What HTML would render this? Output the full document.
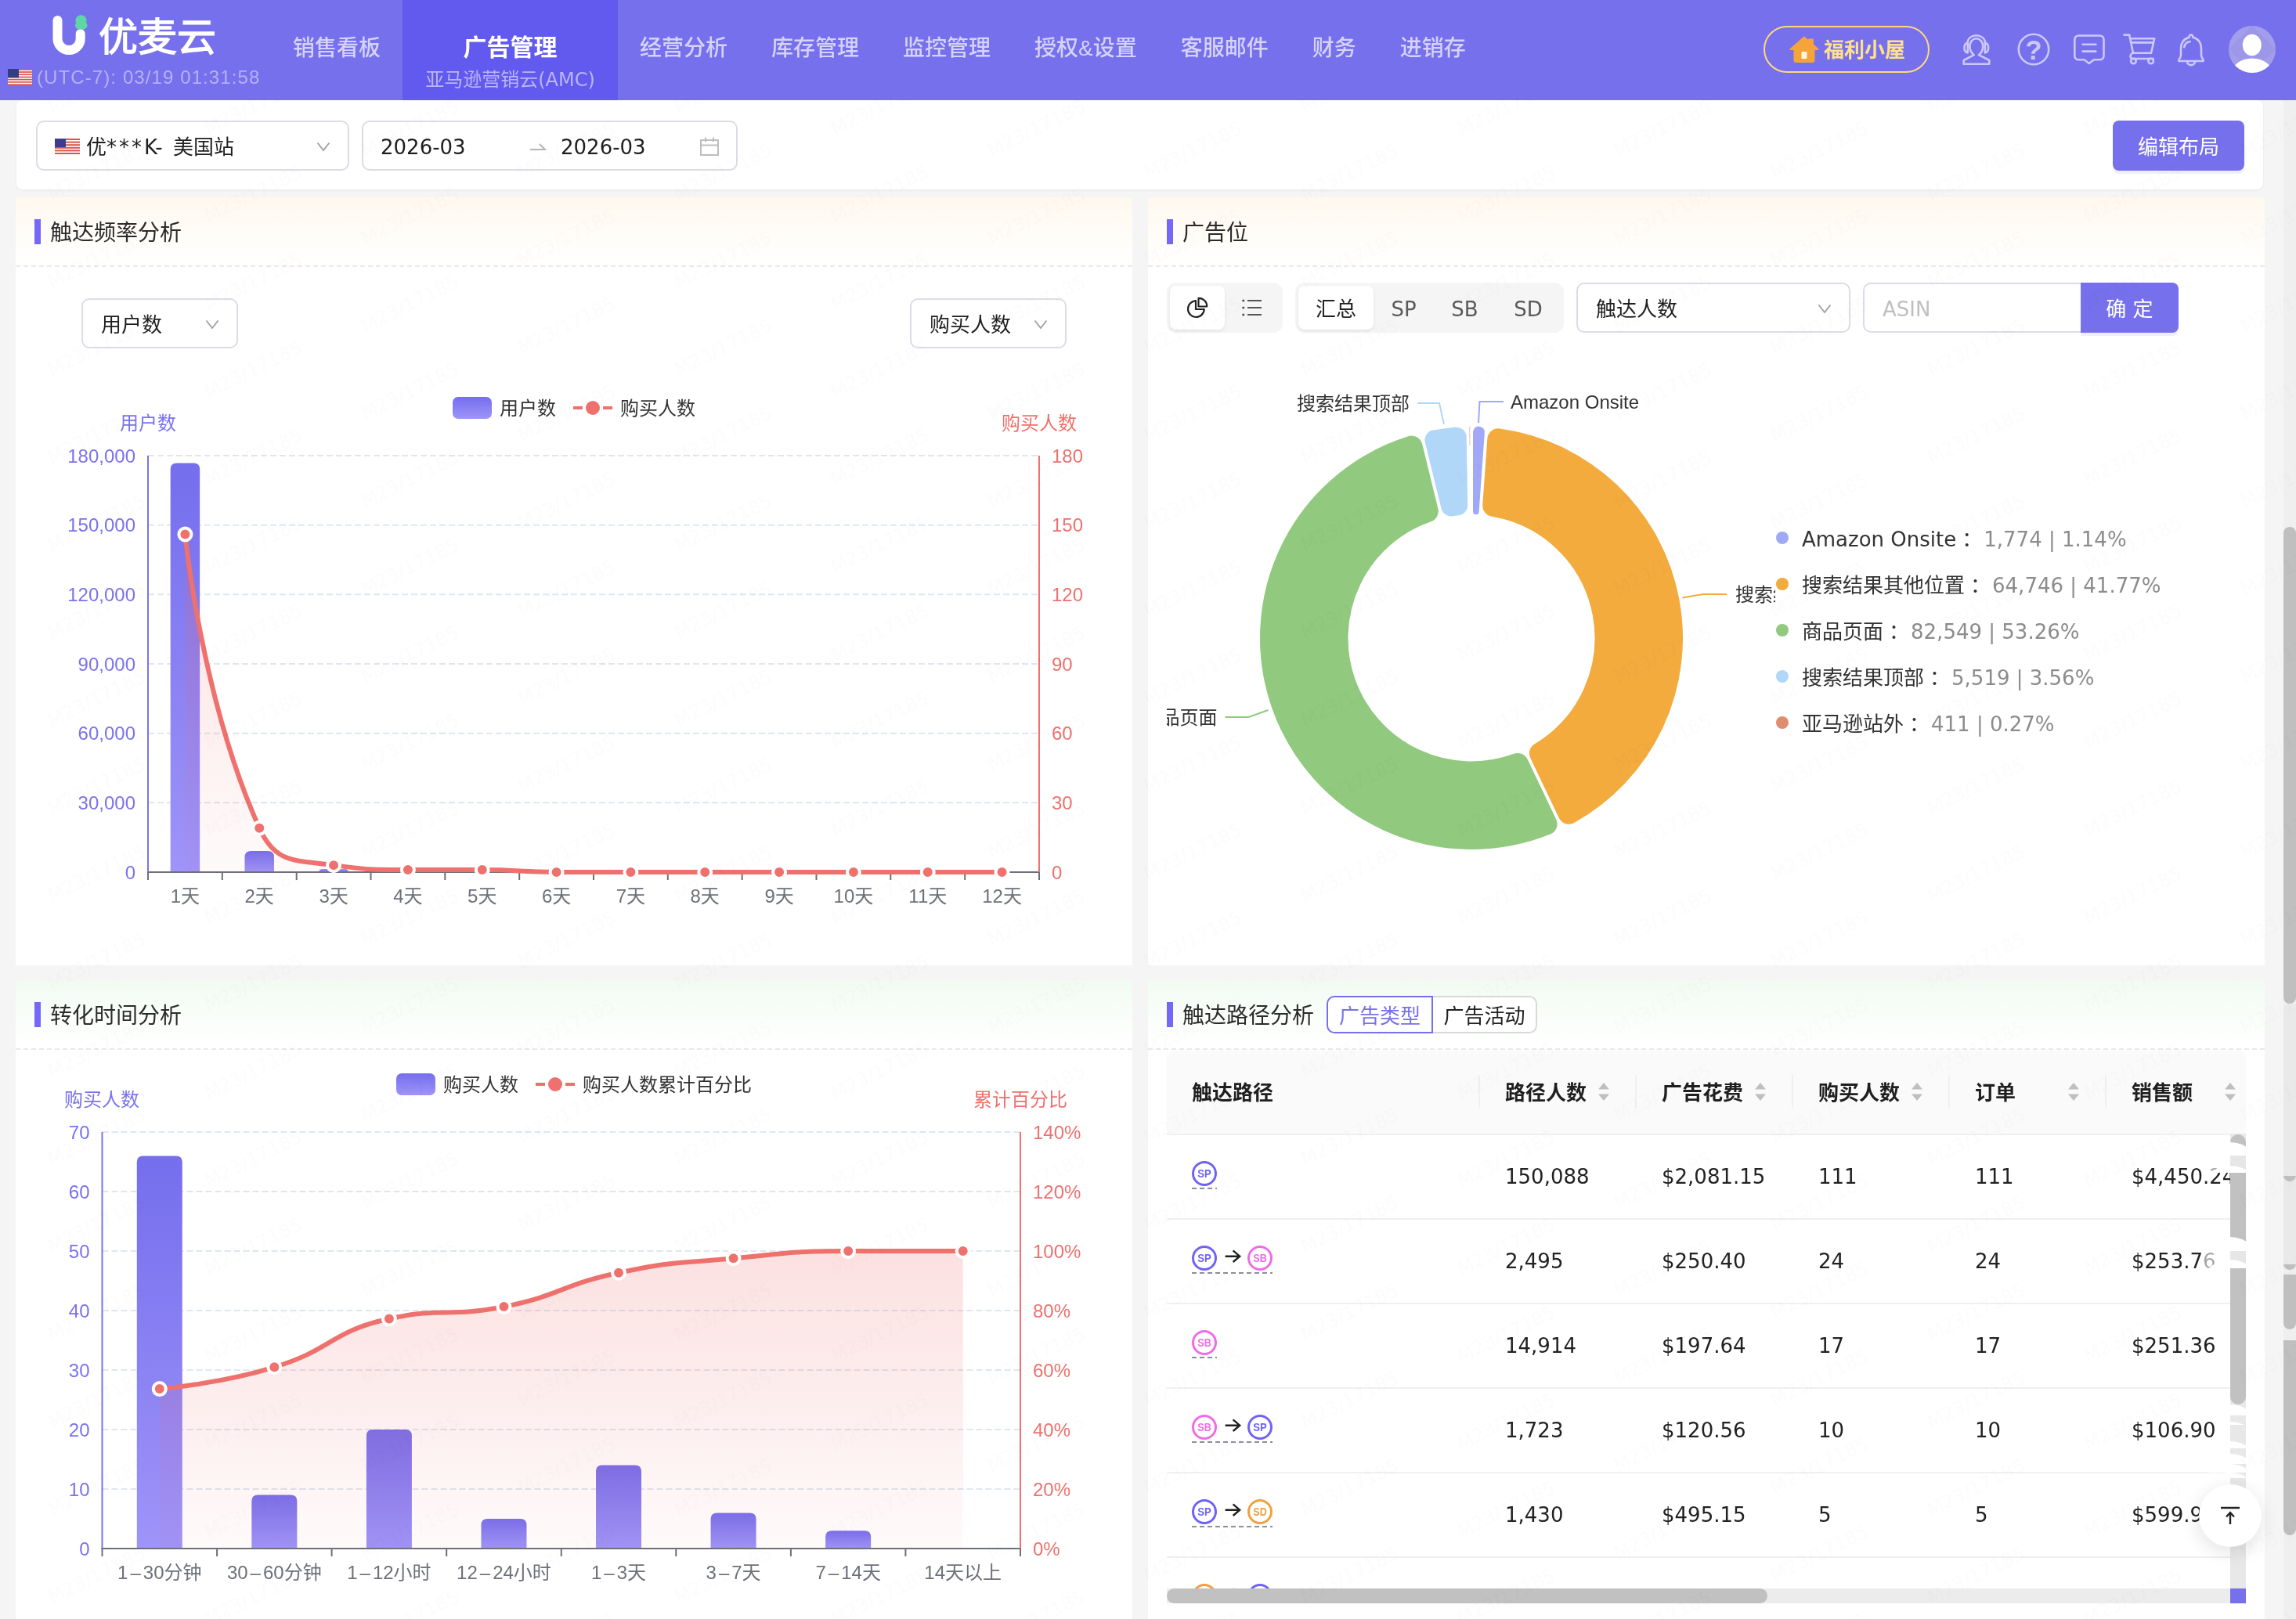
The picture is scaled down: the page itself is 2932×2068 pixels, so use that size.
<!DOCTYPE html>
<html lang="zh-CN">
<head>
<meta charset="utf-8">
<title>优麦云 - 广告管理 - 亚马逊营销云(AMC)</title>
<style>

*{box-sizing:border-box;margin:0;padding:0}
html,body{width:2932px;height:2068px;overflow:hidden;background:#f5f5f5}
body{font-family:"DejaVu Sans","Noto Sans CJK SC",sans-serif;font-size:26px;color:#222;}
#app{position:relative;width:2932px;height:2068px;overflow:hidden;will-change:transform}
.hdr{position:absolute;left:0;top:0;width:2932px;height:128px;background:#7670ed;z-index:5}
.hdr .logo-txt{position:absolute;left:126px;top:7px;font-family:"Noto Sans CJK SC","Liberation Sans",sans-serif;font-weight:400;font-size:50px;line-height:72px;color:#fff;letter-spacing:0px;white-space:nowrap;-webkit-text-stroke:1.4px #fff}
.hdr .tz{position:absolute;left:47px;top:84px;font-family:"Liberation Sans","Noto Sans CJK SC",sans-serif;font-size:24px;line-height:30px;color:#b5b1f6;white-space:nowrap;letter-spacing:1.1px}
.nav{position:absolute;left:346px;top:0;height:128px;display:flex;font-family:"Liberation Sans","Noto Sans CJK SC",sans-serif;}
.nav .it{height:128px;padding:0 28px;font-size:28px;font-weight:500;color:#d5d3fa;line-height:40px;padding-top:42px;white-space:nowrap;text-align:center}
.nav .it.on{background:#625aee;color:#fff;font-size:30px;padding-top:41px;font-weight:700}
.nav .it.on small{display:block;font-size:24px;font-weight:400;color:#b9b5f7;line-height:30px;margin-top:6px;font-family:"DejaVu Sans","Noto Sans CJK SC",sans-serif}
.pill{position:absolute;left:2252px;top:33px;width:212px;height:60px;border:2px solid #ffd978;border-radius:30px;}
.pill span{position:absolute;left:75px;top:0;line-height:58px;font-size:26px;font-weight:700;color:#ffe08c;font-family:"Liberation Sans","Noto Sans CJK SC",sans-serif;white-space:nowrap}
.filterbar{position:absolute;left:21px;top:128px;width:2869px;height:114px;background:#fff;border-radius:8px;box-shadow:0 1px 3px rgba(0,0,0,.06)}
.sel{position:absolute;height:64px;border:2px solid #dcdce6;border-radius:10px;background:#fff}
.sel .seltxt{position:absolute;top:0;line-height:64px;font-size:26px;color:#1f1f1f;white-space:nowrap}
.sel .flag{position:absolute}
.sel .chev{position:absolute}
.btn-primary{position:absolute;background:#7670ed;color:#fff;font-size:26px;text-align:center;border-radius:8px;box-shadow:0 4px 0 rgba(118,112,237,.12);white-space:nowrap}
.panel{position:absolute;background:#fff;overflow:hidden}
.phead{position:absolute;left:0;top:0;right:0;height:89px;}
.phead:after{content:"";position:absolute;left:0;right:0;bottom:0;height:2px;background:repeating-linear-gradient(90deg,#e9e9e9 0 6px,transparent 6px 10px)}
.phead.warm{background:linear-gradient(180deg,#fff8ee 0%,#fffdf9 60%,#ffffff 100%)}
.phead.green{background:linear-gradient(180deg,#f1fbf2 0%,#fbfefb 60%,#ffffff 100%)}
.phead .bar{position:absolute;left:24px;top:28px;width:8px;height:32px;background:#7568f7}
.phead .ptitle{position:absolute;left:44px;top:0;line-height:92px;font-size:28px;color:#2b2b2b;white-space:nowrap}
.seg{position:absolute;height:64px;background:#f5f5f5;border-radius:12px;padding:4px;display:flex}
.segitem{height:56px;line-height:60px;text-align:center;font-size:26px;color:#5a5a5a;border-radius:8px}
.segitem.on{background:#fff;box-shadow:0 2px 4px rgba(0,0,0,.08)}
.radio{position:absolute;height:48px;line-height:48px;border:2px solid #d9d9d9;text-align:center;font-size:26px;color:#222;background:#fff;border-radius:0 10px 10px 0;white-space:nowrap}
.radio.on{border-color:#7670ed;color:#7670ed;border-radius:10px 0 0 10px;z-index:2}
.chart{position:absolute;left:0;top:0}
.chart text{font-family:"Liberation Sans","Noto Sans CJK SC",sans-serif;font-size:24px}
.tbl{position:absolute;left:24px;top:90px;width:1378px;height:706px;overflow:hidden;border-radius:10px 10px 0 0}
.th{position:absolute;top:0;height:106px;line-height:108px;font-weight:700;font-size:26px;color:#1f1f1f;padding-left:32px;white-space:nowrap}
.th i{position:absolute;left:-2px;top:31px;width:2px;height:42px;background:#f0f0f0}
.td{position:absolute;height:108px;line-height:108px;font-size:26px;color:#222;padding-left:32px;white-space:nowrap}
.rowline{position:absolute;left:0;width:1400px;height:2px;background:#f0f0f0}

</style>
</head>
<body>
<div id="app">

<div class="hdr">
  <svg style="position:absolute;left:60px;top:14px" width="60" height="62" viewBox="0 0 60 62">
    <path d="M13.5 12 V35.5 a14.6 14.6 0 0 0 29.2 0 V29" fill="none" stroke="#fff" stroke-width="12" stroke-linecap="round"/>
    <circle cx="43.500" cy="12.300" r="7" fill="#5fd6a6"/><rect x="36" y="13.500" width="15.500" height="10" rx="5" fill="#5fd6a6"/>
  </svg>
  <div class="logo-txt">优麦云</div>
  <svg style="position:absolute;left:10px;top:88px" width="31" height="21" viewBox="0 0 31 21"><rect width="31" height="21" fill="#fff"/><g fill="#D9534F"><rect y="0" width="31" height="1.7"/><rect y="3.2" width="31" height="1.7"/><rect y="6.4" width="31" height="1.7"/><rect y="9.6" width="31" height="1.7"/><rect y="12.8" width="31" height="1.7"/><rect y="16" width="31" height="1.7"/><rect y="19.3" width="31" height="1.7"/></g><rect width="14" height="11.3" fill="#2f3f80"/></svg>
  <div class="tz">(UTC-7): 03/19 01:31:58</div>
  <div class="nav">
    <div class="it">销售看板</div>
    <div class="it on" style="width:275px;padding-left:0;padding-right:0">广告管理<small>亚马逊营销云(AMC)</small></div>
    <div class="it">经营分析</div>
    <div class="it">库存管理</div>
    <div class="it">监控管理</div>
    <div class="it">授权&amp;设置</div>
    <div class="it">客服邮件</div>
    <div class="it">财务</div>
    <div class="it">进销存</div>
  </div>
  <div class="pill">
    <svg style="position:absolute;left:31px;top:11px" width="38" height="34" viewBox="0 0 38 34">
      <path d="M19 1.5 L1.5 17 h5 v14 a2 2 0 0 0 2 2 h21 a2 2 0 0 0 2 -2 v-14 h5 L30 11 V4.5 h-5 V7 Z" fill="#f5a43a" stroke="#f5a43a" stroke-width="2" stroke-linejoin="round"/>
      <rect x="15.5" y="20" width="7" height="9" rx="1" fill="#fff7e0"/>
    </svg>
    <span>福利小屋</span>
  </div>
  <!-- headset -->
  <svg style="position:absolute;left:2504px;top:42px" width="40" height="42" viewBox="0 0 40 42" fill="none" stroke="#cbc8fa" stroke-width="2.600" stroke-linejoin="round" stroke-linecap="round">
    <path d="M16.700 28.200 C12.200 24.500 11.400 20.500 11.400 17.200 A8.400 10 0 0 1 28.200 17.200 C28.200 20.500 27.400 24.500 22.900 28.200 L36.300 35 V39.700 H3.700 V35 Z"/>
    <path d="M8.300 12.600 C9.300 6.600 14 3.200 19.800 3.200 C25.600 3.200 30.300 6.600 31.300 12.600"/>
    <path d="M8.800 12.800 C3 13.800 3 24.400 8.800 25.400 Z M30.800 12.800 C36.600 13.800 36.600 24.400 30.800 25.400 Z"/>
  </svg>
  <!-- help -->
  <svg style="position:absolute;left:2575px;top:41px" width="44" height="44" viewBox="0 0 44 44">
    <circle cx="22" cy="22" r="19.200" fill="none" stroke="#cbc8fa" stroke-width="2.600"/>
    <text x="22" y="34.500" text-anchor="middle" font-family="Liberation Sans,sans-serif" font-weight="700" font-size="35" fill="#cbc8fa">?</text>
  </svg>
  <!-- message -->
  <svg style="position:absolute;left:2646px;top:42px" width="44" height="42" viewBox="0 0 44 42" fill="none" stroke="#cbc8fa" stroke-width="2.600" stroke-linejoin="round" stroke-linecap="round">
    <path d="M8.300 3.500 h27.200 a5 5 0 0 1 5 5 v20.800 a5 5 0 0 1 -5 5 h-7.500 l-6.200 4.700 l-6.200 -4.700 h-7.300 a5 5 0 0 1 -5 -5 v-20.800 a5 5 0 0 1 5 -5 z"/>
    <path d="M13.600 14.800 h16.800 M13.600 23.600 h16.800"/>
  </svg>
  <!-- cart -->
  <svg style="position:absolute;left:2711px;top:42px" width="44" height="42" viewBox="0 0 44 42" fill="none" stroke="#cbc8fa" stroke-width="2.600" stroke-linejoin="round" stroke-linecap="round">
    <path d="M1.500 2.600 H8.200 L13 25.800 H36 L40.200 7.200 H9.300 M10.400 12.400 H39"/>
    <path d="M13 25.800 C8.500 27 8.500 33 12.500 33 H38.800"/>
    <circle cx="13.400" cy="36" r="3.300"/><circle cx="35.700" cy="36" r="3.300"/>
  </svg>
  <!-- bell -->
  <svg style="position:absolute;left:2779px;top:43px" width="38" height="42" viewBox="0 0 38 42" fill="none" stroke="#cbc8fa" stroke-width="2.600" stroke-linejoin="round" stroke-linecap="round">
    <path d="M16.800 4.600 a2.300 2.300 0 1 1 4.400 0 C28 6.500 32 11.500 32 19.600 V27 C32 30 33.500 32 34.600 33.200 V35 H3.400 V33.200 C4.500 32 6 30 6 27 V19.600 C6 11.500 10 6.500 16.800 4.600 Z"/>
    <path d="M14 35.500 a5 4.600 0 0 0 10 0"/>
    <path d="M10.200 17.200 C11 13 14 10.600 17.700 10"/>
  </svg>
  <!-- avatar -->
  <svg style="position:absolute;left:2846px;top:33px" width="60" height="60" viewBox="0 0 60 60">
    <defs><clipPath id="avc"><circle cx="30" cy="30" r="30"/></clipPath></defs>
    <circle cx="30" cy="30" r="30" fill="#a29eec"/>
    <g clip-path="url(#avc)"><path d="M30 0 L60 30 L30 60 L0 30 Z" fill="#9a95e6" opacity="0.700"/><ellipse cx="29.800" cy="24.500" rx="12" ry="13.700" fill="#fff"/><ellipse cx="30" cy="62.500" rx="27" ry="21" fill="#fff"/></g>
  </svg>
</div>

<!-- filter bar -->
<div class="filterbar">
  <div class="sel" style="left:25px;top:26px;width:400px;">
    <svg class="flag" style="left:22px;top:21px" width="32" height="20" viewBox="0 0 32 20"><rect width="32" height="20" fill="#fff"/><g fill="#D9534F"><rect y="0" width="32" height="2"/><rect y="3.6" width="32" height="2"/><rect y="7.2" width="32" height="2"/><rect y="10.8" width="32" height="2"/><rect y="14.4" width="32" height="2"/><rect y="18" width="32" height="2"/></g><rect width="14" height="11" fill="#3C3B8E"/></svg>
    <span class="seltxt" style="left:62px;word-spacing:5px">优<span style="letter-spacing:3px">***</span>K- 美国站</span>
    <svg class="chev" style="right:22px;top:25px" width="18" height="13" viewBox="0 0 18 13"><path d="M1.5 1.5 L9 11 L16.5 1.5" fill="none" stroke="#a3a3a3" stroke-width="2"/></svg>
  </div>
  <div class="sel" style="left:441px;top:26px;width:480px;">
    <span class="seltxt" style="left:22px">2026-03</span>
    <svg style="position:absolute;left:212px;top:26px" width="22" height="12" viewBox="0 0 22 12"><path d="M1 9 H20 L13 2" fill="none" stroke="#b5b5b5" stroke-width="2"/></svg>
    <span class="seltxt" style="left:252px">2026-03</span>
    <svg style="position:absolute;left:430px;top:19px" width="24" height="24" viewBox="0 0 24 24"><rect x="1" y="4" width="22" height="19" fill="none" stroke="#bdbdbd" stroke-width="2"/><path d="M1 10.5 H23 M7 0.5 V6 M17 0.5 V6" stroke="#bdbdbd" stroke-width="2" fill="none"/></svg>
  </div>
  <div class="btn-primary" style="left:2677px;top:26px;width:168px;height:64px;line-height:68px;">编辑布局</div>
</div>

<!-- panel 1 -->
<div class="panel" style="left:20px;top:252px;width:1426px;height:981px;">
  <div class="phead warm"><i class="bar"></i><span class="ptitle">触达频率分析</span></div>
  <div class="sel" style="left:84px;top:129px;width:200px;"><span class="seltxt" style="left:23px">用户数</span>
    <svg class="chev" style="right:22px;top:25px" width="18" height="13" viewBox="0 0 18 13"><path d="M1.5 1.5 L9 11 L16.5 1.5" fill="none" stroke="#a3a3a3" stroke-width="2"/></svg></div>
  <div class="sel" style="left:1142px;top:129px;width:200px;"><span class="seltxt" style="left:23px">购买人数</span>
    <svg class="chev" style="right:22px;top:25px" width="18" height="13" viewBox="0 0 18 13"><path d="M1.5 1.5 L9 11 L16.5 1.5" fill="none" stroke="#a3a3a3" stroke-width="2"/></svg></div>
  <svg class="chart" width="1426" height="981" viewBox="20 252 1426 981">
<defs><linearGradient id="bga" x1="0" y1="0" x2="0" y2="1"><stop offset="0" stop-color="#756eed"/><stop offset="1" stop-color="#9e94f9"/></linearGradient>
<linearGradient id="aga" x1="0" y1="0" x2="0" y2="1"><stop offset="0" stop-color="#ee6666" stop-opacity="0.2"/><stop offset="1" stop-color="#ee6666" stop-opacity="0.03"/></linearGradient></defs>
<path d="M189.0 582.0 H1327.0" stroke="#e0e6f1" stroke-width="2" stroke-dasharray="8 4" fill="none"/>
<path d="M189.0 670.7 H1327.0" stroke="#e0e6f1" stroke-width="2" stroke-dasharray="8 4" fill="none"/>
<path d="M189.0 759.3 H1327.0" stroke="#e0e6f1" stroke-width="2" stroke-dasharray="8 4" fill="none"/>
<path d="M189.0 848.0 H1327.0" stroke="#e0e6f1" stroke-width="2" stroke-dasharray="8 4" fill="none"/>
<path d="M189.0 936.7 H1327.0" stroke="#e0e6f1" stroke-width="2" stroke-dasharray="8 4" fill="none"/>
<path d="M189.0 1025.3 H1327.0" stroke="#e0e6f1" stroke-width="2" stroke-dasharray="8 4" fill="none"/>
<path d="M217.67 1114.00 V599.46 Q217.67 591.46 225.67 591.46 H247.17 Q255.17 591.46 255.17 599.46 V1114.00 Z" fill="url(#bga)"/>
<path d="M312.50 1114.00 V1095.10 Q312.50 1087.10 320.50 1087.10 H342.00 Q350.00 1087.10 350.00 1095.10 V1114.00 Z" fill="url(#bga)"/>
<path d="M407.33 1114.00 V1114.00 Q407.33 1110.16 411.18 1110.16 H440.99 Q444.83 1110.16 444.83 1114.00 V1114.00 Z" fill="url(#bga)"/>
<path d="M502.17 1114.00 V1114.00 Q502.17 1113.23 502.94 1113.23 H538.90 Q539.67 1113.23 539.67 1114.00 V1114.00 Z" fill="url(#bga)"/>
<path d="M597.00 1114.00 V1114.00 Q597.00 1113.65 597.35 1113.65 H634.15 Q634.50 1113.65 634.50 1114.00 V1114.00 Z" fill="url(#bga)"/>
<path d="M188.0 1114.0 H1328.0" stroke="#6e7079" stroke-width="2" fill="none"/>
<path d="M189.0 1114.0 v10 M283.8 1114.0 v10 M378.7 1114.0 v10 M473.5 1114.0 v10 M568.3 1114.0 v10 M663.2 1114.0 v10 M758.0 1114.0 v10 M852.8 1114.0 v10 M947.7 1114.0 v10 M1042.5 1114.0 v10 M1137.3 1114.0 v10 M1232.2 1114.0 v10 M1327.0 1114.0 v10 " stroke="#6e7079" stroke-width="2" fill="none"/>
<text x="236.4" y="1153.0" text-anchor="middle" fill="#6e7079">1天</text>
<text x="331.2" y="1153.0" text-anchor="middle" fill="#6e7079">2天</text>
<text x="426.1" y="1153.0" text-anchor="middle" fill="#6e7079">3天</text>
<text x="520.9" y="1153.0" text-anchor="middle" fill="#6e7079">4天</text>
<text x="615.8" y="1153.0" text-anchor="middle" fill="#6e7079">5天</text>
<text x="710.6" y="1153.0" text-anchor="middle" fill="#6e7079">6天</text>
<text x="805.4" y="1153.0" text-anchor="middle" fill="#6e7079">7天</text>
<text x="900.2" y="1153.0" text-anchor="middle" fill="#6e7079">8天</text>
<text x="995.1" y="1153.0" text-anchor="middle" fill="#6e7079">9天</text>
<text x="1089.9" y="1153.0" text-anchor="middle" fill="#6e7079">10天</text>
<text x="1184.8" y="1153.0" text-anchor="middle" fill="#6e7079">11天</text>
<text x="1279.6" y="1153.0" text-anchor="middle" fill="#6e7079">12天</text>
<path d="M189.0 582.0 V1114.0" stroke="#7a72f0" stroke-width="2" fill="none"/>
<path d="M1327.0 582.0 V1114.0" stroke="#ee716d" stroke-width="2" fill="none"/>
<text x="173.0" y="590.5" text-anchor="end" fill="#7a72f0">180,000</text>
<text x="173.0" y="679.2" text-anchor="end" fill="#7a72f0">150,000</text>
<text x="173.0" y="767.8" text-anchor="end" fill="#7a72f0">120,000</text>
<text x="173.0" y="856.5" text-anchor="end" fill="#7a72f0">90,000</text>
<text x="173.0" y="945.2" text-anchor="end" fill="#7a72f0">60,000</text>
<text x="173.0" y="1033.8" text-anchor="end" fill="#7a72f0">30,000</text>
<text x="173.0" y="1122.5" text-anchor="end" fill="#7a72f0">0</text>
<text x="1343.0" y="590.5" text-anchor="start" fill="#ee716d">180</text>
<text x="1343.0" y="679.2" text-anchor="start" fill="#ee716d">150</text>
<text x="1343.0" y="767.8" text-anchor="start" fill="#ee716d">120</text>
<text x="1343.0" y="856.5" text-anchor="start" fill="#ee716d">90</text>
<text x="1343.0" y="945.2" text-anchor="start" fill="#ee716d">60</text>
<text x="1343.0" y="1033.8" text-anchor="start" fill="#ee716d">30</text>
<text x="1343.0" y="1122.5" text-anchor="start" fill="#ee716d">0</text>
<text x="189.0" y="549.0" text-anchor="middle" fill="#7a72f0">用户数</text>
<text x="1327.0" y="549.0" text-anchor="middle" fill="#ee716d">购买人数</text>
<path d="M236.42 682.49 C236.42 682.49 256.80 891.93 331.25 1057.84 C351.63 1103.26 376.08 1098.54 426.08 1105.13 C470.92 1111.04 473.45 1111.04 520.92 1111.04 C568.29 1111.04 568.34 1111.04 615.75 1111.04 C663.18 1111.04 663.16 1114.00 710.58 1114.00 C757.99 1114.00 758.00 1114.00 805.42 1114.00 C852.83 1114.00 852.83 1114.00 900.25 1114.00 C947.67 1114.00 947.67 1114.00 995.08 1114.00 C1042.50 1114.00 1042.50 1114.00 1089.92 1114.00 C1137.33 1114.00 1137.33 1114.00 1184.75 1114.00 C1232.17 1114.00 1279.58 1114.00 1279.58 1114.00 L1279.58 1114.00 L236.42 1114.00 Z" fill="url(#aga)"/>
<path d="M236.42 682.49 C236.42 682.49 256.80 891.93 331.25 1057.84 C351.63 1103.26 376.08 1098.54 426.08 1105.13 C470.92 1111.04 473.45 1111.04 520.92 1111.04 C568.29 1111.04 568.34 1111.04 615.75 1111.04 C663.18 1111.04 663.16 1114.00 710.58 1114.00 C757.99 1114.00 758.00 1114.00 805.42 1114.00 C852.83 1114.00 852.83 1114.00 900.25 1114.00 C947.67 1114.00 947.67 1114.00 995.08 1114.00 C1042.50 1114.00 1042.50 1114.00 1089.92 1114.00 C1137.33 1114.00 1137.33 1114.00 1184.75 1114.00 C1232.17 1114.00 1279.58 1114.00 1279.58 1114.00" fill="none" stroke="#ee716d" stroke-width="6" stroke-linejoin="round" stroke-linecap="butt"/>
<circle cx="236.42" cy="682.49" r="8" fill="#ee716d" stroke="#fff" stroke-width="4"/>
<circle cx="331.25" cy="1057.84" r="8" fill="#ee716d" stroke="#fff" stroke-width="4"/>
<circle cx="426.08" cy="1105.13" r="8" fill="#ee716d" stroke="#fff" stroke-width="4"/>
<circle cx="520.92" cy="1111.04" r="8" fill="#ee716d" stroke="#fff" stroke-width="4"/>
<circle cx="615.75" cy="1111.04" r="8" fill="#ee716d" stroke="#fff" stroke-width="4"/>
<circle cx="710.58" cy="1114.00" r="8" fill="#ee716d" stroke="#fff" stroke-width="4"/>
<circle cx="805.42" cy="1114.00" r="8" fill="#ee716d" stroke="#fff" stroke-width="4"/>
<circle cx="900.25" cy="1114.00" r="8" fill="#ee716d" stroke="#fff" stroke-width="4"/>
<circle cx="995.08" cy="1114.00" r="8" fill="#ee716d" stroke="#fff" stroke-width="4"/>
<circle cx="1089.92" cy="1114.00" r="8" fill="#ee716d" stroke="#fff" stroke-width="4"/>
<circle cx="1184.75" cy="1114.00" r="8" fill="#ee716d" stroke="#fff" stroke-width="4"/>
<circle cx="1279.58" cy="1114.00" r="8" fill="#ee716d" stroke="#fff" stroke-width="4"/>
<rect x="578.0" y="507.0" width="50" height="28" rx="7" fill="url(#bga)"/>
<text x="638.0" y="529.5" fill="#333">用户数</text>
<path d="M732.0 521.0 h12 M770.0 521.0 h12" stroke="#ee716d" stroke-width="4" fill="none"/>
<circle cx="757.0" cy="521.0" r="9" fill="#ee716d"/>
<text x="792.0" y="529.5" fill="#333">购买人数</text>
</svg>
</div>

<!-- panel 2 -->
<div class="panel" style="left:1466px;top:252px;width:1426px;height:981px;">
  <div class="phead warm"><i class="bar"></i><span class="ptitle">广告位</span></div>
  <div class="seg" style="left:24px;top:109px;width:148px;">
    <div class="segitem on" style="width:70px;">
      <svg width="28" height="28" viewBox="0 0 28 28" style="margin-top:14px"><path d="M12 5.2 A10.4 10.4 0 1 0 22.8 16 H12 Z" fill="none" stroke="#222" stroke-width="2.2" stroke-linejoin="round"/><path d="M15.5 1.8 A10.4 10.4 0 0 1 26.2 12.5 H15.5 Z" fill="none" stroke="#222" stroke-width="2.2" stroke-linejoin="round"/></svg>
    </div>
    <div class="segitem" style="width:70px;">
      <svg width="26" height="22" viewBox="0 0 26 22" style="margin-top:17px"><g stroke="#555" stroke-width="2.2" fill="none"><path d="M7 2 H25 M7 11 H25 M7 20 H25"/></g><g fill="#555"><circle cx="1.8" cy="2" r="1.6"/><circle cx="1.8" cy="11" r="1.6"/><circle cx="1.8" cy="20" r="1.6"/></g></svg>
    </div>
  </div>
  <div class="seg" style="left:188px;top:109px;width:343px;">
    <div class="segitem on" style="width:96px;color:#222">汇总</div>
    <div class="segitem" style="width:77px;">SP</div>
    <div class="segitem" style="width:79px;">SB</div>
    <div class="segitem" style="width:83px;">SD</div>
  </div>
  <div class="sel" style="left:547px;top:109px;width:350px;"><span class="seltxt" style="left:23px">触达人数</span>
    <svg class="chev" style="right:22px;top:25px" width="18" height="13" viewBox="0 0 18 13"><path d="M1.5 1.5 L9 11 L16.5 1.5" fill="none" stroke="#a3a3a3" stroke-width="2"/></svg></div>
  <div class="sel" style="left:913px;top:109px;width:290px;border-radius:10px 0 0 10px;"><span class="seltxt" style="left:23px;color:#bfbfbf">ASIN</span></div>
  <div class="btn-primary" style="left:1191px;top:109px;width:125px;height:64px;line-height:68px;border-radius:0 8px 8px 0;">确 定</div>
  <svg class="chart" style="left:24px;top:170px" width="777" height="790" viewBox="1490 422 777 790">
<path d="M1895.88 552.61 L1888.60 653.81 A3.80 3.80 0 0 1 1881.01 653.53 L1881.02 552.07 A7.44 7.44 0 1 1 1895.88 552.61 Z" fill="#a0a8f7"/>
<path d="M1913.32 561.31 A256.00 256.00 0 0 1 2003.44 1038.72 L1966.95 962.23 A171.50 171.50 0 0 0 1907.23 645.84 Z" fill="#f2ab3c" stroke="#f2ab3c" stroke-width="28.0" stroke-linejoin="round"/>
<path d="M1974.56 1052.50 A256.00 256.00 0 1 1 1802.63 570.66 L1822.81 652.97 A171.50 171.50 0 1 0 1938.07 976.01 Z" fill="#91c97f" stroke="#91c97f" stroke-width="28.0" stroke-linejoin="round"/>
<path d="M1832.49 562.24 A257.00 257.00 0 0 1 1859.73 558.72 L1861.17 645.43 A170.50 170.50 0 0 0 1853.13 646.47 Z" fill="#b0d7f7" stroke="#b0d7f7" stroke-width="26.0" stroke-linejoin="round"/>
<path d="M1876.75 545.01 L1876.95 569.01" stroke="#e08d6f" stroke-width="1" stroke-opacity="0.6" fill="none"/>
<path d="M1844 542 L1838 515 H1810" fill="none" stroke="#b0d7f7" stroke-width="2"/>
<path d="M1888 540 L1889.500 513 H1920" fill="none" stroke="#a0a8f7" stroke-width="2"/>
<path d="M2148.500 763.500 L2175 759 H2205" fill="none" stroke="#f2ab3c" stroke-width="2"/>
<path d="M1619.500 907 L1594.500 916 H1564.500" fill="none" stroke="#91c97f" stroke-width="2"/>
<text x="1800" y="523.500" text-anchor="end" fill="#333">搜索结果顶部</text>
<text x="1929" y="521.500" text-anchor="start" fill="#333">Amazon Onsite</text>
<text x="2216" y="768" text-anchor="start" fill="#333">搜索结果其他位置</text>
<text x="1554.500" y="924.500" text-anchor="end" fill="#333">商品页面</text>
</svg>
<div style="position:absolute;left:801px;top:400px;width:560px;height:330px;background:#fff"></div>
<div style="position:absolute;left:802px;top:417.0px;height:40px;line-height:40px;white-space:nowrap;font-size:26px;color:#333"><i style="position:absolute;left:0;top:10px;width:16px;height:16px;border-radius:8px;background:#a0a8f7"></i><span style="margin-left:33px">Amazon Onsite<span style="position:relative;left:7px">：</span></span><span style="color:#8c8c8c;margin-left:9px">1,774 | 1.14%</span></div>
<div style="position:absolute;left:802px;top:475.9px;height:40px;line-height:40px;white-space:nowrap;font-size:26px;color:#333"><i style="position:absolute;left:0;top:10px;width:16px;height:16px;border-radius:8px;background:#f2ab3c"></i><span style="margin-left:33px">搜索结果其他位置<span style="position:relative;left:7px">：</span></span><span style="color:#8c8c8c;margin-left:9px">64,746 | 41.77%</span></div>
<div style="position:absolute;left:802px;top:534.8px;height:40px;line-height:40px;white-space:nowrap;font-size:26px;color:#333"><i style="position:absolute;left:0;top:10px;width:16px;height:16px;border-radius:8px;background:#91c97f"></i><span style="margin-left:33px">商品页面<span style="position:relative;left:7px">：</span></span><span style="color:#8c8c8c;margin-left:9px">82,549 | 53.26%</span></div>
<div style="position:absolute;left:802px;top:593.7px;height:40px;line-height:40px;white-space:nowrap;font-size:26px;color:#333"><i style="position:absolute;left:0;top:10px;width:16px;height:16px;border-radius:8px;background:#b0d7f7"></i><span style="margin-left:33px">搜索结果顶部<span style="position:relative;left:7px">：</span></span><span style="color:#8c8c8c;margin-left:9px">5,519 | 3.56%</span></div>
<div style="position:absolute;left:802px;top:652.6px;height:40px;line-height:40px;white-space:nowrap;font-size:26px;color:#333"><i style="position:absolute;left:0;top:10px;width:16px;height:16px;border-radius:8px;background:#e08d6f"></i><span style="margin-left:33px">亚马逊站外<span style="position:relative;left:7px">：</span></span><span style="color:#8c8c8c;margin-left:9px">411 | 0.27%</span></div>
</div>

<!-- panel 3 -->
<div class="panel" style="left:20px;top:1252px;width:1426px;height:816px;">
  <div class="phead green"><i class="bar"></i><span class="ptitle">转化时间分析</span></div>
  <svg class="chart" width="1426" height="816" viewBox="20 1252 1426 816">
<defs><linearGradient id="bgb" x1="0" y1="0" x2="0" y2="1"><stop offset="0" stop-color="#756eed"/><stop offset="1" stop-color="#9e94f9"/></linearGradient>
<linearGradient id="agb" x1="0" y1="0" x2="0" y2="1"><stop offset="0" stop-color="#ee6666" stop-opacity="0.2"/><stop offset="1" stop-color="#ee6666" stop-opacity="0.03"/></linearGradient></defs>
<path d="M130.5 1446.0 H1303.0" stroke="#e0e6f1" stroke-width="2" stroke-dasharray="8 4" fill="none"/>
<path d="M130.5 1522.0 H1303.0" stroke="#e0e6f1" stroke-width="2" stroke-dasharray="8 4" fill="none"/>
<path d="M130.5 1598.0 H1303.0" stroke="#e0e6f1" stroke-width="2" stroke-dasharray="8 4" fill="none"/>
<path d="M130.5 1674.0 H1303.0" stroke="#e0e6f1" stroke-width="2" stroke-dasharray="8 4" fill="none"/>
<path d="M130.5 1750.0 H1303.0" stroke="#e0e6f1" stroke-width="2" stroke-dasharray="8 4" fill="none"/>
<path d="M130.5 1826.0 H1303.0" stroke="#e0e6f1" stroke-width="2" stroke-dasharray="8 4" fill="none"/>
<path d="M130.5 1902.0 H1303.0" stroke="#e0e6f1" stroke-width="2" stroke-dasharray="8 4" fill="none"/>
<path d="M174.78 1978.00 V1484.40 Q174.78 1476.40 182.78 1476.40 H224.78 Q232.78 1476.40 232.78 1484.40 V1978.00 Z" fill="url(#bgb)"/>
<path d="M321.34 1978.00 V1917.60 Q321.34 1909.60 329.34 1909.60 H371.34 Q379.34 1909.60 379.34 1917.60 V1978.00 Z" fill="url(#bgb)"/>
<path d="M467.91 1978.00 V1834.00 Q467.91 1826.00 475.91 1826.00 H517.91 Q525.91 1826.00 525.91 1834.00 V1978.00 Z" fill="url(#bgb)"/>
<path d="M614.47 1978.00 V1948.00 Q614.47 1940.00 622.47 1940.00 H664.47 Q672.47 1940.00 672.47 1948.00 V1978.00 Z" fill="url(#bgb)"/>
<path d="M761.03 1978.00 V1879.60 Q761.03 1871.60 769.03 1871.60 H811.03 Q819.03 1871.60 819.03 1879.60 V1978.00 Z" fill="url(#bgb)"/>
<path d="M907.59 1978.00 V1940.40 Q907.59 1932.40 915.59 1932.40 H957.59 Q965.59 1932.40 965.59 1940.40 V1978.00 Z" fill="url(#bgb)"/>
<path d="M1054.16 1978.00 V1963.20 Q1054.16 1955.20 1062.16 1955.20 H1104.16 Q1112.16 1955.20 1112.16 1963.20 V1978.00 Z" fill="url(#bgb)"/>
<path d="M129.5 1978.0 H1304.0" stroke="#6e7079" stroke-width="2" fill="none"/>
<path d="M130.5 1978.0 v10 M277.1 1978.0 v10 M423.6 1978.0 v10 M570.2 1978.0 v10 M716.8 1978.0 v10 M863.3 1978.0 v10 M1009.9 1978.0 v10 M1156.4 1978.0 v10 M1303.0 1978.0 v10 " stroke="#6e7079" stroke-width="2" fill="none"/>
<text x="203.8" y="2017.0" text-anchor="middle" fill="#6e7079">1<tspan dx="3">–</tspan><tspan dx="3">30分钟</tspan></text>
<text x="350.3" y="2017.0" text-anchor="middle" fill="#6e7079">30<tspan dx="3">–</tspan><tspan dx="3">60分钟</tspan></text>
<text x="496.9" y="2017.0" text-anchor="middle" fill="#6e7079">1<tspan dx="3">–</tspan><tspan dx="3">12小时</tspan></text>
<text x="643.5" y="2017.0" text-anchor="middle" fill="#6e7079">12<tspan dx="3">–</tspan><tspan dx="3">24小时</tspan></text>
<text x="790.0" y="2017.0" text-anchor="middle" fill="#6e7079">1<tspan dx="3">–</tspan><tspan dx="3">3天</tspan></text>
<text x="936.6" y="2017.0" text-anchor="middle" fill="#6e7079">3<tspan dx="3">–</tspan><tspan dx="3">7天</tspan></text>
<text x="1083.2" y="2017.0" text-anchor="middle" fill="#6e7079">7<tspan dx="3">–</tspan><tspan dx="3">14天</tspan></text>
<text x="1229.7" y="2017.0" text-anchor="middle" fill="#6e7079">14天以上</text>
<path d="M130.5 1446.0 V1978.0" stroke="#7a72f0" stroke-width="2" fill="none"/>
<path d="M1303.0 1446.0 V1978.0" stroke="#ee716d" stroke-width="2" fill="none"/>
<text x="114.5" y="1454.5" text-anchor="end" fill="#7a72f0">70</text>
<text x="114.5" y="1530.5" text-anchor="end" fill="#7a72f0">60</text>
<text x="114.5" y="1606.5" text-anchor="end" fill="#7a72f0">50</text>
<text x="114.5" y="1682.5" text-anchor="end" fill="#7a72f0">40</text>
<text x="114.5" y="1758.5" text-anchor="end" fill="#7a72f0">30</text>
<text x="114.5" y="1834.5" text-anchor="end" fill="#7a72f0">20</text>
<text x="114.5" y="1910.5" text-anchor="end" fill="#7a72f0">10</text>
<text x="114.5" y="1986.5" text-anchor="end" fill="#7a72f0">0</text>
<text x="1319.0" y="1454.5" text-anchor="start" fill="#ee716d">140%</text>
<text x="1319.0" y="1530.5" text-anchor="start" fill="#ee716d">120%</text>
<text x="1319.0" y="1606.5" text-anchor="start" fill="#ee716d">100%</text>
<text x="1319.0" y="1682.5" text-anchor="start" fill="#ee716d">80%</text>
<text x="1319.0" y="1758.5" text-anchor="start" fill="#ee716d">60%</text>
<text x="1319.0" y="1834.5" text-anchor="start" fill="#ee716d">40%</text>
<text x="1319.0" y="1910.5" text-anchor="start" fill="#ee716d">20%</text>
<text x="1319.0" y="1986.5" text-anchor="start" fill="#ee716d">0%</text>
<text x="130.0" y="1413.0" text-anchor="middle" fill="#7a72f0">购买人数</text>
<text x="1303.0" y="1413.0" text-anchor="middle" fill="#ee716d">累计百分比</text>
<path d="M203.78 1774.10 C203.78 1774.10 279.41 1767.97 350.34 1746.29 C425.97 1723.18 420.83 1701.18 496.91 1684.50 C567.39 1669.06 571.51 1683.47 643.47 1669.06 C718.08 1654.12 715.51 1641.51 790.03 1625.80 C862.07 1610.62 863.09 1614.24 936.59 1607.27 C1009.66 1600.34 1009.80 1598.00 1083.16 1598.00 C1156.36 1598.00 1229.72 1598.00 1229.72 1598.00 L1229.72 1978.00 L203.78 1978.00 Z" fill="url(#agb)"/>
<path d="M203.78 1774.10 C203.78 1774.10 279.41 1767.97 350.34 1746.29 C425.97 1723.18 420.83 1701.18 496.91 1684.50 C567.39 1669.06 571.51 1683.47 643.47 1669.06 C718.08 1654.12 715.51 1641.51 790.03 1625.80 C862.07 1610.62 863.09 1614.24 936.59 1607.27 C1009.66 1600.34 1009.80 1598.00 1083.16 1598.00 C1156.36 1598.00 1229.72 1598.00 1229.72 1598.00" fill="none" stroke="#ee716d" stroke-width="6" stroke-linejoin="round" stroke-linecap="butt"/>
<circle cx="203.78" cy="1774.10" r="8" fill="#ee716d" stroke="#fff" stroke-width="4"/>
<circle cx="350.34" cy="1746.29" r="8" fill="#ee716d" stroke="#fff" stroke-width="4"/>
<circle cx="496.91" cy="1684.50" r="8" fill="#ee716d" stroke="#fff" stroke-width="4"/>
<circle cx="643.47" cy="1669.06" r="8" fill="#ee716d" stroke="#fff" stroke-width="4"/>
<circle cx="790.03" cy="1625.80" r="8" fill="#ee716d" stroke="#fff" stroke-width="4"/>
<circle cx="936.59" cy="1607.27" r="8" fill="#ee716d" stroke="#fff" stroke-width="4"/>
<circle cx="1083.16" cy="1598.00" r="8" fill="#ee716d" stroke="#fff" stroke-width="4"/>
<circle cx="1229.72" cy="1598.00" r="8" fill="#ee716d" stroke="#fff" stroke-width="4"/>
<rect x="506.0" y="1371.0" width="50" height="28" rx="7" fill="url(#bgb)"/>
<text x="566.0" y="1393.5" fill="#333">购买人数</text>
<path d="M684.0 1385.0 h12 M722.0 1385.0 h12" stroke="#ee716d" stroke-width="4" fill="none"/>
<circle cx="709.0" cy="1385.0" r="9" fill="#ee716d"/>
<text x="744.0" y="1393.5" fill="#333">购买人数累计百分比</text>
</svg>
</div>

<!-- panel 4 -->
<div class="panel" style="left:1466px;top:1252px;width:1426px;height:816px;">
  <div class="phead green"><i class="bar"></i><span class="ptitle">触达路径分析</span>
    <div class="radio on" style="left:228px;top:20px;width:136px;">广告类型</div>
    <div class="radio" style="left:362px;top:20px;width:135px;">广告活动</div>
  </div>
  <div class="tbl">
<div style="position:absolute;left:0;top:0;width:1378px;height:106px;background:#fafafa"></div>
<div class="th" style="left:0px;width:200px">触达路径</div>
<div class="th" style="left:400px;width:200px"><i></i>路径人数</div>
<svg style="position:absolute;left:550px;top:40px" width="16" height="26" viewBox="0 0 16 26"><path d="M8 1 L15 9.500 H1 Z" fill="#bfbfbf"/><path d="M8 24 L15 15.500 H1 Z" fill="#bfbfbf"/></svg>
<div class="th" style="left:600px;width:200px"><i></i>广告花费</div>
<svg style="position:absolute;left:750px;top:40px" width="16" height="26" viewBox="0 0 16 26"><path d="M8 1 L15 9.500 H1 Z" fill="#bfbfbf"/><path d="M8 24 L15 15.500 H1 Z" fill="#bfbfbf"/></svg>
<div class="th" style="left:800px;width:200px"><i></i>购买人数</div>
<svg style="position:absolute;left:950px;top:40px" width="16" height="26" viewBox="0 0 16 26"><path d="M8 1 L15 9.500 H1 Z" fill="#bfbfbf"/><path d="M8 24 L15 15.500 H1 Z" fill="#bfbfbf"/></svg>
<div class="th" style="left:1000px;width:200px"><i></i>订单</div>
<svg style="position:absolute;left:1150px;top:40px" width="16" height="26" viewBox="0 0 16 26"><path d="M8 1 L15 9.500 H1 Z" fill="#bfbfbf"/><path d="M8 24 L15 15.500 H1 Z" fill="#bfbfbf"/></svg>
<div class="th" style="left:1200px;width:200px"><i></i>销售额</div>
<svg style="position:absolute;left:1350px;top:40px" width="16" height="26" viewBox="0 0 16 26"><path d="M8 1 L15 9.500 H1 Z" fill="#bfbfbf"/><path d="M8 24 L15 15.500 H1 Z" fill="#bfbfbf"/></svg>
<div class="rowline" style="top:106px"></div>
<svg style="position:absolute;left:32px;top:108px" width="140" height="108" viewBox="0 0 140 108"><circle cx="16" cy="49" r="14.500" fill="#fff" stroke="#6f63f5" stroke-width="3"/><text x="16" y="54" text-anchor="middle" font-family="Liberation Sans,sans-serif" font-weight="700" font-size="14" fill="#6f63f5" textLength="17.500" lengthAdjust="spacingAndGlyphs">SP</text><path d="M0 68 H32" stroke="#8e8e99" stroke-width="2" stroke-dasharray="6 4" fill="none"/></svg>
<div class="td" style="left:400px;top:107px">150,088</div>
<div class="td" style="left:600px;top:107px">$2,081.15</div>
<div class="td" style="left:800px;top:107px">111</div>
<div class="td" style="left:1000px;top:107px">111</div>
<div class="td" style="left:1200px;top:107px">$4,450.24</div>
<div class="rowline" style="top:214px"></div>
<svg style="position:absolute;left:32px;top:216px" width="140" height="108" viewBox="0 0 140 108"><circle cx="16" cy="49" r="14.500" fill="#fff" stroke="#6f63f5" stroke-width="3"/><text x="16" y="54" text-anchor="middle" font-family="Liberation Sans,sans-serif" font-weight="700" font-size="14" fill="#6f63f5" textLength="17.500" lengthAdjust="spacingAndGlyphs">SP</text><path d="M42.6 46.700 H61.0 M52.6 39.400 L61.2 46.700 L52.6 54" fill="none" stroke="#1f1f1f" stroke-width="2.400"/><circle cx="87" cy="49" r="14.500" fill="#fff" stroke="#ee6ce6" stroke-width="3"/><text x="87" y="54" text-anchor="middle" font-family="Liberation Sans,sans-serif" font-weight="700" font-size="14" fill="#ee6ce6" textLength="17.500" lengthAdjust="spacingAndGlyphs">SB</text><path d="M0 68 H103" stroke="#8e8e99" stroke-width="2" stroke-dasharray="6 4" fill="none"/></svg>
<div class="td" style="left:400px;top:215px">2,495</div>
<div class="td" style="left:600px;top:215px">$250.40</div>
<div class="td" style="left:800px;top:215px">24</div>
<div class="td" style="left:1000px;top:215px">24</div>
<div class="td" style="left:1200px;top:215px">$253.76</div>
<div class="rowline" style="top:322px"></div>
<svg style="position:absolute;left:32px;top:324px" width="140" height="108" viewBox="0 0 140 108"><circle cx="16" cy="49" r="14.500" fill="#fff" stroke="#ee6ce6" stroke-width="3"/><text x="16" y="54" text-anchor="middle" font-family="Liberation Sans,sans-serif" font-weight="700" font-size="14" fill="#ee6ce6" textLength="17.500" lengthAdjust="spacingAndGlyphs">SB</text><path d="M0 68 H32" stroke="#8e8e99" stroke-width="2" stroke-dasharray="6 4" fill="none"/></svg>
<div class="td" style="left:400px;top:323px">14,914</div>
<div class="td" style="left:600px;top:323px">$197.64</div>
<div class="td" style="left:800px;top:323px">17</div>
<div class="td" style="left:1000px;top:323px">17</div>
<div class="td" style="left:1200px;top:323px">$251.36</div>
<div class="rowline" style="top:430px"></div>
<svg style="position:absolute;left:32px;top:432px" width="140" height="108" viewBox="0 0 140 108"><circle cx="16" cy="49" r="14.500" fill="#fff" stroke="#ee6ce6" stroke-width="3"/><text x="16" y="54" text-anchor="middle" font-family="Liberation Sans,sans-serif" font-weight="700" font-size="14" fill="#ee6ce6" textLength="17.500" lengthAdjust="spacingAndGlyphs">SB</text><path d="M42.6 46.700 H61.0 M52.6 39.400 L61.2 46.700 L52.6 54" fill="none" stroke="#1f1f1f" stroke-width="2.400"/><circle cx="87" cy="49" r="14.500" fill="#fff" stroke="#6f63f5" stroke-width="3"/><text x="87" y="54" text-anchor="middle" font-family="Liberation Sans,sans-serif" font-weight="700" font-size="14" fill="#6f63f5" textLength="17.500" lengthAdjust="spacingAndGlyphs">SP</text><path d="M0 68 H103" stroke="#8e8e99" stroke-width="2" stroke-dasharray="6 4" fill="none"/></svg>
<div class="td" style="left:400px;top:431px">1,723</div>
<div class="td" style="left:600px;top:431px">$120.56</div>
<div class="td" style="left:800px;top:431px">10</div>
<div class="td" style="left:1000px;top:431px">10</div>
<div class="td" style="left:1200px;top:431px">$106.90</div>
<div class="rowline" style="top:538px"></div>
<svg style="position:absolute;left:32px;top:540px" width="140" height="108" viewBox="0 0 140 108"><circle cx="16" cy="49" r="14.500" fill="#fff" stroke="#6f63f5" stroke-width="3"/><text x="16" y="54" text-anchor="middle" font-family="Liberation Sans,sans-serif" font-weight="700" font-size="14" fill="#6f63f5" textLength="17.500" lengthAdjust="spacingAndGlyphs">SP</text><path d="M42.6 46.700 H61.0 M52.6 39.400 L61.2 46.700 L52.6 54" fill="none" stroke="#1f1f1f" stroke-width="2.400"/><circle cx="87" cy="49" r="14.500" fill="#fff" stroke="#f0a040" stroke-width="3"/><text x="87" y="54" text-anchor="middle" font-family="Liberation Sans,sans-serif" font-weight="700" font-size="14" fill="#f0a040" textLength="17.500" lengthAdjust="spacingAndGlyphs">SD</text><path d="M0 68 H103" stroke="#8e8e99" stroke-width="2" stroke-dasharray="6 4" fill="none"/></svg>
<div class="td" style="left:400px;top:539px">1,430</div>
<div class="td" style="left:600px;top:539px">$495.15</div>
<div class="td" style="left:800px;top:539px">5</div>
<div class="td" style="left:1000px;top:539px">5</div>
<div class="td" style="left:1200px;top:539px">$599.95</div>
<div class="rowline" style="top:646px"></div>
<svg style="position:absolute;left:32px;top:648px" width="140" height="108" viewBox="0 0 140 108"><circle cx="16" cy="49" r="14.500" fill="#fff" stroke="#f0a040" stroke-width="3"/><text x="16" y="54" text-anchor="middle" font-family="Liberation Sans,sans-serif" font-weight="700" font-size="14" fill="#f0a040" textLength="17.500" lengthAdjust="spacingAndGlyphs">SD</text><path d="M42.6 46.700 H61.0 M52.6 39.400 L61.2 46.700 L52.6 54" fill="none" stroke="#1f1f1f" stroke-width="2.400"/><circle cx="87" cy="49" r="14.500" fill="#fff" stroke="#6f63f5" stroke-width="3"/><text x="87" y="54" text-anchor="middle" font-family="Liberation Sans,sans-serif" font-weight="700" font-size="14" fill="#6f63f5" textLength="17.500" lengthAdjust="spacingAndGlyphs">SP</text><path d="M0 68 H103" stroke="#8e8e99" stroke-width="2" stroke-dasharray="6 4" fill="none"/></svg>
<div class="td" style="left:400px;top:647px">1,209</div>
<div class="td" style="left:600px;top:647px">$88.12</div>
<div class="td" style="left:800px;top:647px">4</div>
<div class="td" style="left:1000px;top:647px">4</div>
<div class="td" style="left:1200px;top:647px">$96.40</div>
<div style="position:absolute;left:1358px;top:106px;width:20px;height:581px;background:#e8e8e8"></div>
<div style="position:absolute;left:1358px;top:107px;width:20px;height:345px;background:#c1c1c1;border-radius:10px"></div>
<div style="position:absolute;left:0;top:687px;width:1358px;height:19px;background:#ececec"></div>
<div style="position:absolute;left:0;top:687px;width:767px;height:19px;background:#c1c1c1;border-radius:10px"></div>
<div style="position:absolute;left:1358px;top:687px;width:20px;height:19px;background:#7670ed"></div>
</div>
</div>
<div style="position:absolute;left:2916px;top:128px;width:16px;height:1940px;background:#efefef"></div>
<div style="position:absolute;left:2916px;top:673px;width:16px;height:609px;background:#bfbfbf;border-radius:8px"></div>
<div style="position:absolute;left:2916px;top:1283px;width:16px;height:337px;background:#e9e9e9"></div>
<div style="position:absolute;left:2916px;top:1502px;width:16px;height:7px;overflow:hidden"><div style="position:absolute;left:0;bottom:0;width:16px;height:16px;border-radius:8px;background:#bfbfbf"></div></div>
<div style="position:absolute;left:2916px;top:1615px;width:16px;height:7px;overflow:hidden"><div style="position:absolute;left:0;bottom:0;width:16px;height:16px;border-radius:8px;background:#bfbfbf"></div></div>
<div style="position:absolute;left:2916px;top:1628px;width:16px;height:70px;background:#bfbfbf;border-radius:0 0 8px 8px"></div>
<div style="position:absolute;left:2916px;top:1712px;width:16px;height:249px;background:#bfbfbf;border-radius:0 0 8px 8px"></div>
<div style="position:absolute;left:2808px;top:1459px;width:80px;height:17px;overflow:hidden;opacity:1"><div style="width:80px;height:80px;border-radius:40px;background:#fff"></div></div>
<div style="position:absolute;left:2808px;top:1489px;width:80px;height:9px;overflow:hidden;opacity:1"><div style="width:80px;height:80px;border-radius:40px;background:#fff"></div></div>
<div style="position:absolute;left:2808px;top:1580px;width:80px;height:18px;overflow:hidden;opacity:1"><div style="width:80px;height:80px;border-radius:40px;background:#fff"></div></div>
<div style="position:absolute;left:2808px;top:1609px;width:80px;height:11px;overflow:hidden;opacity:1"><div style="width:80px;height:80px;border-radius:40px;background:#fff"></div></div>
<div style="position:absolute;left:2808px;top:1794px;width:80px;height:14px;overflow:hidden;opacity:1"><div style="width:80px;height:80px;border-radius:40px;background:#fff"></div></div>
<div style="position:absolute;left:2808px;top:1816px;width:80px;height:4px;overflow:hidden;opacity:1"><div style="width:80px;height:80px;border-radius:40px;background:#fff"></div></div>
<div style="position:absolute;left:2808px;top:1841px;width:80px;height:9px;overflow:hidden;opacity:1"><div style="width:80px;height:80px;border-radius:40px;background:#fff"></div></div>
<div style="position:absolute;left:2808px;top:1857px;width:80px;height:13px;overflow:hidden;opacity:1"><div style="width:80px;height:80px;border-radius:40px;background:#fff"></div></div>
<div style="position:absolute;left:2808px;top:1870px;width:80px;height:11px;overflow:hidden;opacity:1"><div style="width:80px;height:80px;border-radius:40px;background:#fff"></div></div>
<div style="position:absolute;left:2808px;top:1881px;width:80px;height:7px;overflow:hidden;opacity:1"><div style="width:80px;height:80px;border-radius:40px;background:#fff"></div></div>
<div style="position:absolute;left:2815px;top:1476px;width:77px;height:22px;background:rgba(255,255,255,.6)"></div>
<div style="position:absolute;left:2815px;top:1598px;width:77px;height:22px;background:rgba(255,255,255,.6)"></div>
<div style="position:absolute;left:2808px;top:1896px;width:80px;height:80px;border-radius:40px;background:#fff;box-shadow:0 6px 24px rgba(0,0,0,.12)"><svg style="position:absolute;left:27px;top:27px" width="26" height="26" viewBox="0 0 26 26"><path d="M1 3 H25 M13 24 V9 M8 14.500 L13 9 L18 14.500" fill="none" stroke="#222" stroke-width="2.400"/></svg></div>
<svg style="position:absolute;left:0;top:128px;pointer-events:none" width="2932" height="1940"><defs><pattern id="wm" width="800" height="112" patternUnits="userSpaceOnUse"><g font-family="DejaVu Sans,sans-serif" font-size="24" fill="#000" fill-opacity="0.011"><text transform="translate(-134 101) rotate(-26)">M23/17185</text><text transform="translate(66 17) rotate(-26)">M23/17185</text><text transform="translate(66 129) rotate(-26)">M23/17185</text><text transform="translate(266 45) rotate(-26)">M23/17185</text><text transform="translate(266 157) rotate(-26)">M23/17185</text><text transform="translate(466 73) rotate(-26)">M23/17185</text><text transform="translate(466 185) rotate(-26)">M23/17185</text><text transform="translate(666 101) rotate(-26)">M23/17185</text></g></pattern></defs><rect width="2932" height="1940" fill="url(#wm)"/></svg>
</div>
</body>
</html>
